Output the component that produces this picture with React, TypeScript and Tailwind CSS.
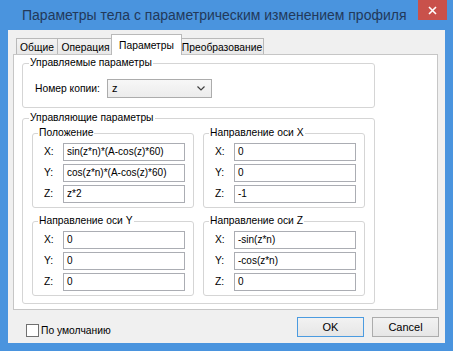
import React from 'react';

type Row = { label: string; value: string };

const AXES: { title: string; rows: Row[] }[] = [
  {
    title: 'Положение',
    rows: [
      { label: 'X:', value: 'sin(z*n)*(A-cos(z)*60)' },
      { label: 'Y:', value: 'cos(z*n)*(A-cos(z)*60)' },
      { label: 'Z:', value: 'z*2' },
    ],
  },
  {
    title: 'Направление оси X',
    rows: [
      { label: 'X:', value: '0' },
      { label: 'Y:', value: '0' },
      { label: 'Z:', value: '-1' },
    ],
  },
  {
    title: 'Направление оси Y',
    rows: [
      { label: 'X:', value: '0' },
      { label: 'Y:', value: '0' },
      { label: 'Z:', value: '0' },
    ],
  },
  {
    title: 'Направление оси Z',
    rows: [
      { label: 'X:', value: '-sin(z*n)' },
      { label: 'Y:', value: '-cos(z*n)' },
      { label: 'Z:', value: '0' },
    ],
  },
];

const AxisGroup = ({ title, rows }: { title: string; rows: Row[] }) => (
  <fieldset className="min-w-0 border border-[#d5d5d5] rounded-[3px] pt-[4px] pb-[4px]">
    <legend className="ml-[5px] px-[1px] leading-[12px]">{title}</legend>
    <div className="flex flex-col gap-[3px]">
      {rows.map((r) => (
        <div key={r.label} className="flex items-center h-[18px]">
          <span className="w-[30px] pl-[11px]">{r.label}</span>
          <div className="w-[122px] h-[18px] border border-[#abadb3] bg-white pl-[3px] text-[10px] leading-[16px] whitespace-nowrap overflow-hidden">
            {r.value}
          </div>
        </div>
      ))}
    </div>
  </fieldset>
);

const Tab = ({ label, width, active, className = '' }: { label: string; width: string; active?: boolean; className?: string }) =>
  active ? (
    <div className={`relative z-10 -mb-px h-[21px] ${width} ${className} bg-white border border-b-0 border-[#b9b9b9] flex justify-center pt-[3px]`}>
      {label}
    </div>
  ) : (
    <div className={`h-[16px] ${width} ${className} bg-gradient-to-b from-[#f3f3f3] to-[#e8e8e8] border border-b-0 border-[#b9b9b9] flex justify-center pt-[1px]`}>
      {label}
    </div>
  );

export default function App() {
  return (
    <div className="w-[453px] h-[351px] bg-[#4a94de] flex flex-col font-['Liberation_Sans',Arial,sans-serif] text-[10.3px] text-black">
      {/* title bar */}
      <div className="h-[30px] flex items-start">
        <span className="ml-[22px] mt-[6px] text-[14px] leading-[18px] text-[#22395a] whitespace-nowrap">
          Параметры тела с параметрическим изменением профиля
        </span>
        <div className="ml-auto mr-[6px] w-[29px] h-[20px] bg-[#c9514b] flex items-center justify-center">
          <svg width="9" height="9" viewBox="0 0 9 9">
            <path d="M1 1 L8 8 M8 1 L1 8" stroke="white" strokeWidth="1.6" />
          </svg>
        </div>
      </div>

      {/* client area */}
      <div className="mx-[8px] h-[313px] bg-[#f0f0f0] flex flex-col">
        <div className="h-[24px] flex items-end pl-[8px]">
          <Tab label="Общие" width="w-[42px]" />
          <Tab label="Операция" width="w-[57px]" className="-ml-px" />
          <Tab label="Параметры" width="w-[71px]" active className="-ml-[3px]" />
          <Tab label="Преобразование" width="w-[84px]" className="-ml-[2px]" />
        </div>

        <div className="ml-[5px] w-[425px] h-[256px] bg-white border border-[#c6c6c6] flex flex-col">
          <fieldset className="ml-[8px] mt-[2px] w-[353px] border border-[#d5d5d5] rounded-[3px] pt-[10px] pb-[9px]">
            <legend className="ml-[6px] px-[1px] leading-[12px]">Управляемые параметры</legend>
            <div className="flex items-center pl-[12px]">
              <span className="w-[72px]">Номер копии:</span>
              <div className="w-[105px] h-[19px] border border-[#acacac] bg-gradient-to-b from-[#f7f7f7] to-[#ececec] flex items-center pl-[4px] pr-[6px]">
                <span className="flex-1 text-[11px]">z</span>
                <svg width="8" height="5" viewBox="0 0 8 5">
                  <path d="M0.5 0.5 L4 4 L7.5 0.5" fill="none" stroke="#404040" strokeWidth="1.2" />
                </svg>
              </div>
            </div>
          </fieldset>

          <fieldset className="ml-[8px] mt-[4px] w-[353px] border border-[#d5d5d5] rounded-[3px] pt-[3px] pb-[7px]">
            <legend className="ml-[6px] px-[1px] leading-[12px]">Управляющие параметры</legend>
            <div className="grid grid-cols-[162px_162px] gap-x-[9px] gap-y-[7px] pl-[9px]">
              {AXES.map((a) => (
                <AxisGroup key={a.title} title={a.title} rows={a.rows} />
              ))}
            </div>
          </fieldset>
        </div>

        <div className="flex items-start pt-[7px] pl-[18px] pr-[6px]">
          <div className="flex items-center mt-[6px]">
            <div className="w-[13px] h-[13px] border border-[#707070] bg-white" />
            <span className="ml-[2px]">По умолчанию</span>
          </div>
          <button className="ml-auto w-[67px] h-[20px] border border-[#4b9be0] bg-gradient-to-b from-[#f2f2f2] to-[#e6e6e6] text-[11px]">
            OK
          </button>
          <button className="ml-[8px] w-[67px] h-[20px] border border-[#acacac] bg-gradient-to-b from-[#f2f2f2] to-[#e6e6e6] text-[11px]">
            Cancel
          </button>
        </div>
      </div>
    </div>
  );
}
